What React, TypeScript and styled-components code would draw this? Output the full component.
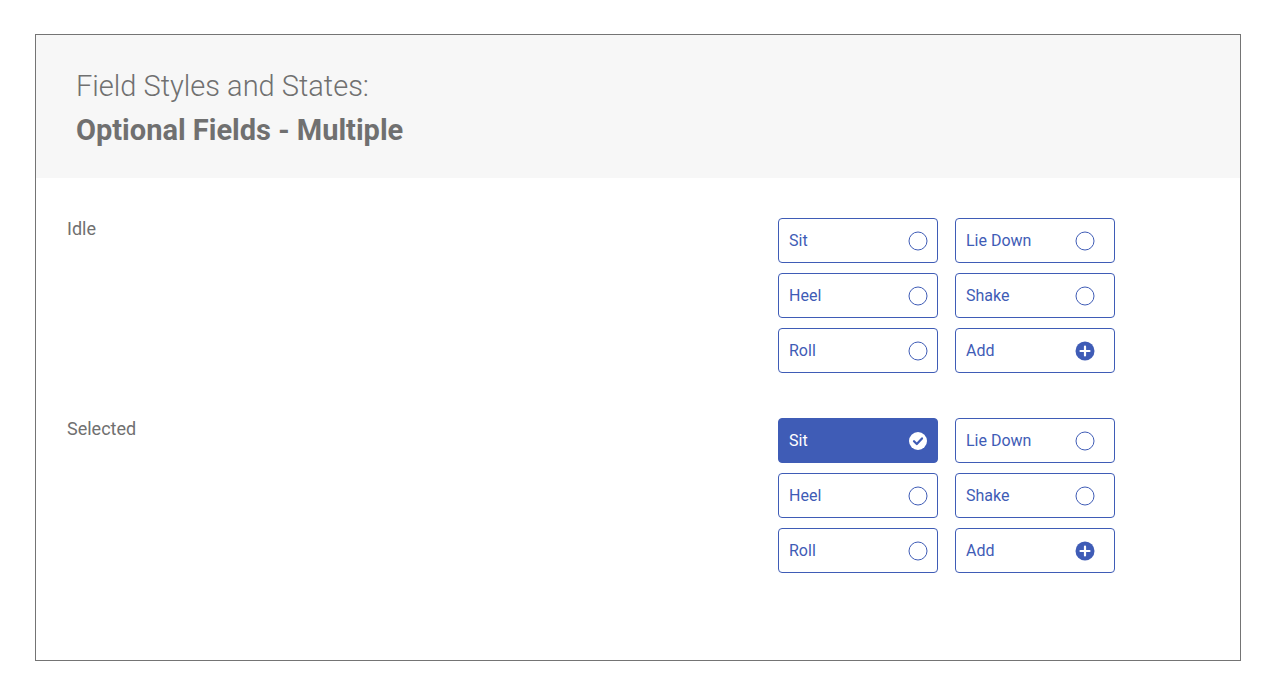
import React from "react";
import styled, { createGlobalStyle } from "styled-components";

const Global = createGlobalStyle`
  html, body { margin: 0; padding: 0; background: #ffffff; }
  body { font-family: Roboto, "Noto Sans", sans-serif; }
`;

const BLUE = "#3f5cb6";

const Page = styled.div`
  padding: 34px 35px 0 35px;
`;

const Frame = styled.div`
  width: 1206px;
  height: 627px;
  box-sizing: border-box;
  border: 1px solid #747474;
  display: flex;
  flex-direction: column;
`;

const Header = styled.header`
  background: #f7f7f7;
  padding: 29px 40px 26px;
  color: #707070;
`;

const TitleLight = styled.div`
  font-size: 29px;
  font-weight: 300;
  line-height: 44px;
`;

const TitleBold = styled.div`
  font-size: 29px;
  font-weight: 700;
  line-height: 44px;
`;

const Body = styled.div`
  padding: 40px 125px 0 31px;
  display: flex;
  flex-direction: column;
  gap: 45px;
`;

const Section = styled.section`
  display: flex;
  align-items: flex-start;
`;

const Label = styled.div`
  flex: 1;
  font-size: 18px;
  line-height: 21px;
  color: #707070;
`;

const Grid = styled.div`
  display: grid;
  grid-template-columns: 160px 160px;
  column-gap: 17px;
  row-gap: 10px;
`;

const Chip = styled.div<{ $selected?: boolean; $right?: boolean }>`
  box-sizing: border-box;
  height: 45px;
  border: 1px solid ${BLUE};
  border-radius: 4px;
  background: ${(p) => (p.$selected ? BLUE : "#ffffff")};
  color: ${(p) => (p.$selected ? "#ffffff" : BLUE)};
  display: flex;
  align-items: center;
  justify-content: space-between;
  padding: 0 ${(p) => (p.$right ? "19px" : "9px")} 0 10px;
  font-size: 16px;
`;

const Icon = styled.svg`
  width: 20px;
  height: 20px;
  flex: none;
`;

const Empty = () => (
  <Icon viewBox="0 0 20 20">
    <circle cx="10" cy="10" r="9" fill="none" stroke={BLUE} strokeWidth="1" />
  </Icon>
);

const Check = () => (
  <Icon viewBox="0 0 20 20">
    <circle cx="10" cy="10" r="9" fill="#ffffff" />
    <path d="M6 10.2 L8.8 13 L14 7.4" fill="none" stroke={BLUE} strokeWidth="2.2" strokeLinecap="round" strokeLinejoin="round" />
  </Icon>
);

const Plus = () => (
  <Icon viewBox="0 0 20 20">
    <circle cx="10" cy="10" r="9.5" fill={BLUE} />
    <path d="M10 5.5 V14.5 M5.5 10 H14.5" stroke="#ffffff" strokeWidth="2.2" strokeLinecap="round" />
  </Icon>
);

type Item = { label: string; kind: "empty" | "check" | "plus" };

const items = (selectedFirst: boolean): Item[] => [
  { label: "Sit", kind: selectedFirst ? "check" : "empty" },
  { label: "Lie Down", kind: "empty" },
  { label: "Heel", kind: "empty" },
  { label: "Shake", kind: "empty" },
  { label: "Roll", kind: "empty" },
  { label: "Add", kind: "plus" },
];

const Group = ({ selectedFirst }: { selectedFirst: boolean }) => (
  <Grid>
    {items(selectedFirst).map((it, i) => (
      <Chip key={it.label} $selected={it.kind === "check"} $right={i % 2 === 1}>
        <span>{it.label}</span>
        {it.kind === "check" ? <Check /> : it.kind === "plus" ? <Plus /> : <Empty />}
      </Chip>
    ))}
  </Grid>
);

export default function App() {
  return (
    <>
      <Global />
      <Page>
        <Frame>
          <Header>
            <TitleLight>Field Styles and States:</TitleLight>
            <TitleBold>Optional Fields - Multiple</TitleBold>
          </Header>
          <Body>
            <Section>
              <Label>Idle</Label>
              <Group selectedFirst={false} />
            </Section>
            <Section>
              <Label>Selected</Label>
              <Group selectedFirst={true} />
            </Section>
          </Body>
        </Frame>
      </Page>
    </>
  );
}
